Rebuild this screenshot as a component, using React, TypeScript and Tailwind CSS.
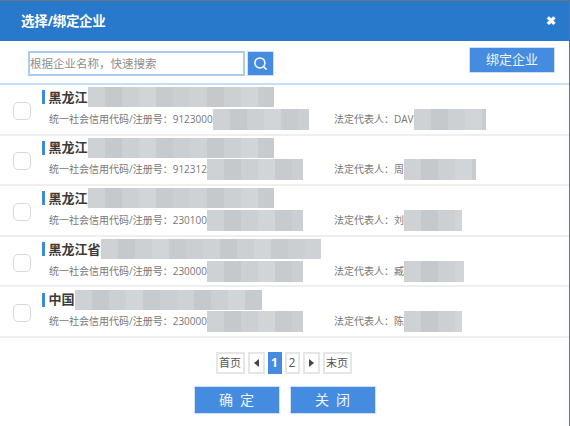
import React from 'react';
import { Search } from 'lucide-react';

interface Company {
  name: string;
  nameBlur: number;
  code: string;
  codeBlur: number;
  legal: string;
  legalBlur: number;
}

const companies: Company[] = [
  { name: '黑龙江', nameBlur: 186, code: '9123000', codeBlur: 96, legal: 'DAV', legalBlur: 72 },
  { name: '黑龙江', nameBlur: 186, code: '912312', codeBlur: 96, legal: '周', legalBlur: 72 },
  { name: '黑龙江', nameBlur: 186, code: '230100', codeBlur: 96, legal: '刘', legalBlur: 58 },
  { name: '黑龙江省', nameBlur: 220, code: '230000', codeBlur: 96, legal: '臧', legalBlur: 60 },
  { name: '中国', nameBlur: 187, code: '230000', codeBlur: 96, legal: '陈', legalBlur: 58 },
];

const tones = ['bg-[#cfd2d4]', 'bg-[#c6c9cb]', 'bg-[#cdd0d2]', 'bg-[#d2d5d7]', 'bg-[#c8cbcd]', 'bg-[#cccfd1]'];

// pixelated block that hides private text
const Mosaic = ({ width, height }: { width: number; height: number }) => (
  <span className="inline-flex shrink-0 overflow-hidden" style={{ width, height }}>
    {Array.from({ length: Math.ceil(width / 17) }).map((_, i) => (
      <span key={i} className={`h-full w-[17px] shrink-0 ${tones[i % tones.length]}`} />
    ))}
  </span>
);

const PageButton = ({ children, className = '' }: { children: React.ReactNode; className?: string }) => (
  <div className={`flex h-[22px] items-center justify-center border-2 border-[#e6e6e6] bg-white text-[11px] text-[#555] ${className}`}>
    {children}
  </div>
);

const App: React.FC = () => {
  return (
    <div className="flex h-[426px] w-[570px] flex-col border-t border-r border-[#6b7280] bg-white font-['Open_Sans','Noto_Sans_CJK_SC',sans-serif]">
      <header className="flex h-[40px] shrink-0 items-center justify-between bg-[#2878cb] pl-[21px] pr-[13px]">
        <h1 className="text-[13.5px] font-bold tracking-[-0.3px] text-white">选择/绑定企业</h1>
        <span className="text-[12px] font-bold leading-none text-white">✖</span>
      </header>

      <div className="flex h-[44px] shrink-0 items-start justify-between border-b-2 border-[#c5e0f3] pl-[28px] pr-[14px]">
        <div className="mt-[10px] flex gap-[2px]">
          <div className="flex h-[25px] w-[217px] items-center border-2 border-[#a9ccef] text-[11.5px] text-[#8e8e8e]">
            根据企业名称，快速搜索
          </div>
          <button className="flex h-[25px] w-[27px] items-center justify-center border border-[#cfe2f5] bg-[#458ce0]">
            <Search className="h-[15px] w-[15px] text-white" strokeWidth={2.4} />
          </button>
        </div>
        <button className="mt-[6px] h-[26px] w-[86px] border border-[#cfe2f5] bg-[#458ce0] text-[13px] text-white/90">
          绑定企业
        </button>
      </div>

      <ul className="shrink-0">
        {companies.map((c, i) => (
          <li key={i} className="flex h-[50.6px] items-center border-b-2 border-[#efefef] pl-[13px]">
            <span className="mt-[3px] h-[18px] w-[18px] shrink-0 rounded-[5px] border border-[#d5d9de] bg-white" />
            <div className="mb-[2px] ml-[11px] flex min-w-0 flex-col">
              <div className="flex h-[21px] items-center">
                <span className="h-[14px] w-[3px] bg-[#3d8be0]" />
                <span className="ml-[3.5px] text-[13px] font-bold leading-none text-[#3a3a3a]">{c.name}</span>
                <Mosaic width={c.nameBlur} height={20} />
              </div>
              <div className="ml-[7px] mt-[1px] flex h-[21px] items-center text-[10px] text-[#777]">
                <div className="flex w-[285px] items-center">
                  <span className="whitespace-nowrap">统一社会信用代码/注册号：{c.code}</span>
                  <Mosaic width={c.codeBlur} height={21} />
                </div>
                <span className="whitespace-nowrap">法定代表人：{c.legal}</span>
                <Mosaic width={c.legalBlur} height={21} />
              </div>
            </div>
          </li>
        ))}
      </ul>

      <div className="mt-[14px] flex justify-center gap-[3px] pr-[2px]">
        <PageButton className="w-[29px]">首页</PageButton>
        <PageButton className="w-[17px]"><span className="border-y-[4px] border-r-[5px] border-y-transparent border-r-[#444]" /></PageButton>
        <div className="flex h-[22px] w-[14px] items-center justify-center bg-[#458ce0] text-[12px] font-bold text-white">1</div>
        <PageButton className="w-[15px] text-[12px]">2</PageButton>
        <PageButton className="w-[17px]"><span className="border-y-[4px] border-l-[5px] border-y-transparent border-l-[#444]" /></PageButton>
        <PageButton className="w-[29px]">末页</PageButton>
      </div>

      <div className="mt-[12px] flex justify-center gap-[10px]">
        <button className="h-[28px] w-[86px] border border-[#cfe2f5] bg-[#458ce0] pl-[7px] text-[14px] tracking-[7px] text-white/90">确定</button>
        <button className="h-[28px] w-[86px] border border-[#cfe2f5] bg-[#458ce0] pl-[7px] text-[14px] tracking-[7px] text-white/90">关闭</button>
      </div>
    </div>
  );
};

export default App;
